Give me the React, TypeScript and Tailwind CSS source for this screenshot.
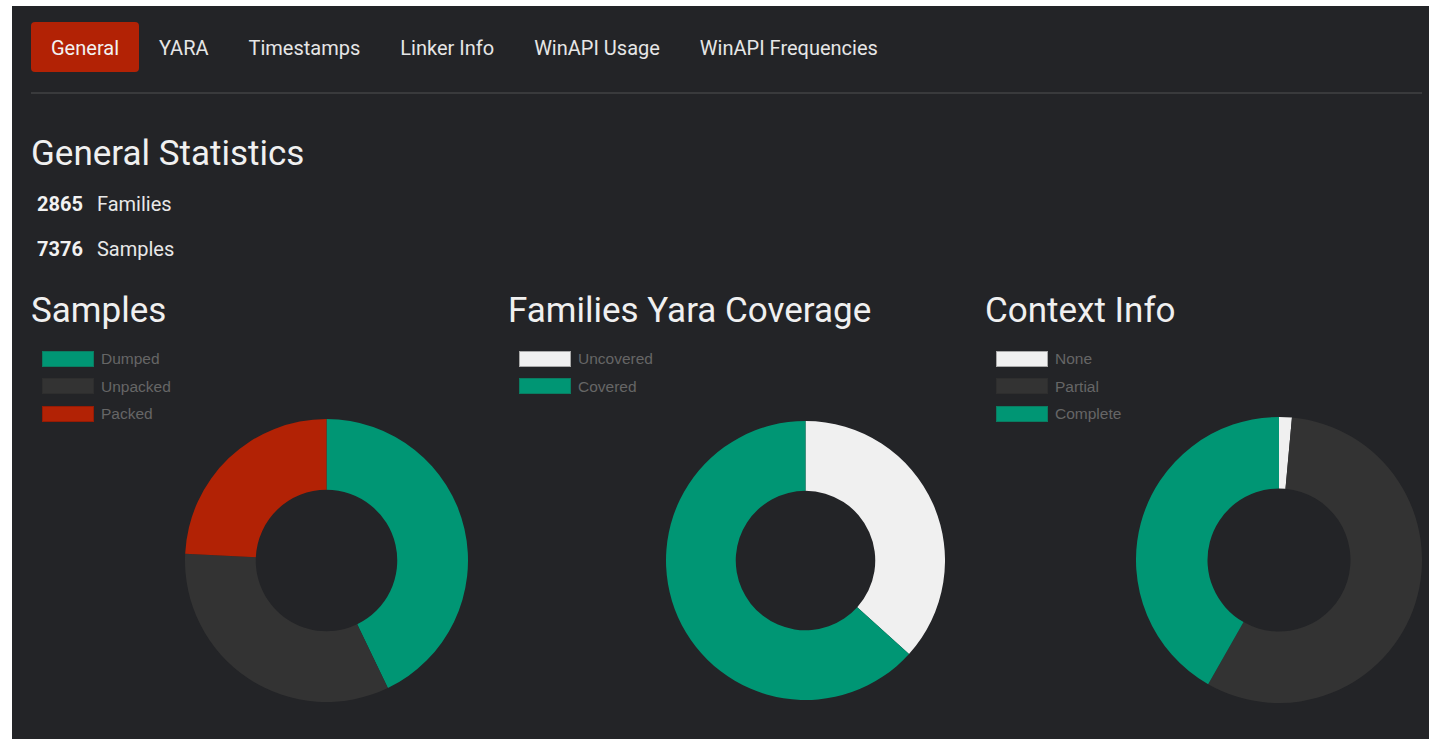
import React from 'react';

type Slice = { from: number; to: number; fill: string };
type LegendItem = { label: string; swatch: string };
type Chart = { title: string; radius: number; slices: Slice[]; legend: LegendItem[] };

const GREEN = '#009674';
const RED = '#b22205';
const DARK = '#333333';
const LIGHT = '#f0f0f0';

const tabs = ['General', 'YARA', 'Timestamps', 'Linker Info', 'WinAPI Usage', 'WinAPI Frequencies'];

const stats = [
  { value: '2865', label: 'Families' },
  { value: '7376', label: 'Samples' },
];

// angles are degrees clockwise from 12 o'clock
const charts: Chart[] = [
  {
    title: 'Samples',
    radius: 141.5,
    slices: [
      { from: 0, to: 154.3, fill: GREEN },
      { from: 154.3, to: 272.7, fill: DARK },
      { from: 272.7, to: 360, fill: RED },
    ],
    legend: [
      { label: 'Dumped', swatch: 'bg-[#009674] border-[#0a7c61]' },
      { label: 'Unpacked', swatch: 'bg-[#333333] border-[#2e2e2e]' },
      { label: 'Packed', swatch: 'bg-[#b22205] border-[#951b05]' },
    ],
  },
  {
    title: 'Families Yara Coverage',
    radius: 139.5,
    slices: [
      { from: 0, to: 132.1, fill: LIGHT },
      { from: 132.1, to: 360, fill: GREEN },
    ],
    legend: [
      { label: 'Uncovered', swatch: 'bg-[#f0f0f0] border-[#a9a9a9]' },
      { label: 'Covered', swatch: 'bg-[#009674] border-[#0a7c61]' },
    ],
  },
  {
    title: 'Context Info',
    radius: 143,
    slices: [
      { from: 0, to: 5.2, fill: LIGHT },
      { from: 5.2, to: 209.7, fill: DARK },
      { from: 209.7, to: 360, fill: GREEN },
    ],
    legend: [
      { label: 'None', swatch: 'bg-[#f0f0f0] border-[#a9a9a9]' },
      { label: 'Partial', swatch: 'bg-[#333333] border-[#2e2e2e]' },
      { label: 'Complete', swatch: 'bg-[#009674] border-[#0a7c61]' },
    ],
  },
];

function point(c: number, r: number, deg: number) {
  const a = (deg * Math.PI) / 180;
  return [c + r * Math.sin(a), c - r * Math.cos(a)];
}

function sector(c: number, r0: number, r1: number, a0: number, a1: number) {
  const large = a1 - a0 > 180 ? 1 : 0;
  const [x0, y0] = point(c, r1, a0);
  const [x1, y1] = point(c, r1, a1);
  const [x2, y2] = point(c, r0, a1);
  const [x3, y3] = point(c, r0, a0);
  return `M${x0} ${y0} A${r1} ${r1} 0 ${large} 1 ${x1} ${y1} L${x2} ${y2} A${r0} ${r0} 0 ${large} 0 ${x3} ${y3} Z`;
}

function Donut({ radius, slices }: { radius: number; slices: Slice[] }) {
  const size = radius * 2;
  const inner = radius / 2;
  return (
    <svg width={size} height={size} viewBox={`0 0 ${size} ${size}`}>
      {slices.map((s, i) => (
        <path key={i} d={sector(radius, inner, radius, s.from, s.to)} fill={s.fill} />
      ))}
    </svg>
  );
}

function ChartPanel({ chart }: { chart: Chart }) {
  return (
    <div>
      <h2 className="text-[35px] leading-[42px] text-[#f0f0f0]">{chart.title}</h2>
      <div className="mt-[13px] flex items-start">
        <ul className="pl-[11px] font-['Liberation_Sans',Arial,sans-serif] text-[15.5px] text-[#666666]">
          {chart.legend.map((item) => (
            <li key={item.label} className="flex h-[27.5px] items-center gap-[7px]">
              <span className={`block h-4 w-[52px] border ${item.swatch}`} />
              <span>{item.label}</span>
            </li>
          ))}
        </ul>
        <div className="ml-auto mt-[70px] flex h-[290px] items-center">
          <Donut radius={chart.radius} slices={chart.slices} />
        </div>
      </div>
    </div>
  );
}

export default function App() {
  return (
    <div className="min-h-screen overflow-hidden bg-white font-['Roboto','Noto_Sans',sans-serif]">
      <div className="ml-[12px] mt-[6px] min-h-[733px] bg-[#232427] pl-[19px] pr-[7px] pt-4 text-[#e8e8e8]">
        <nav className="flex">
          {tabs.map((tab, i) => (
            <button
              key={tab}
              className={
                i === 0
                  ? 'h-[50px] rounded px-5 pt-[2px] text-[20px] text-[#f2f2f2] bg-[#b22205]'
                  : 'h-[50px] rounded px-5 pt-[2px] text-[20px] text-[#e6e6e6]'
              }
            >
              {tab}
            </button>
          ))}
        </nav>
        <div className="mt-5 border-t-2 border-[#393a3c]" />

        <h1 className="mt-[39px] text-[35px] leading-[42px] text-[#f0f0f0]">General Statistics</h1>
        <div className="mt-[15px] flex flex-col gap-[17px]">
          {stats.map((s) => (
            <div key={s.label} className="flex items-baseline gap-[14px] pl-[6px] text-[20px] leading-7">
              <span className="font-bold text-[#f2f2f2]">{s.value}</span>
              <span>{s.label}</span>
            </div>
          ))}
        </div>

        <div className="mt-[27px] grid grid-cols-3 gap-x-10">
          {charts.map((c) => (
            <ChartPanel key={c.title} chart={c} />
          ))}
        </div>
      </div>
    </div>
  );
}
